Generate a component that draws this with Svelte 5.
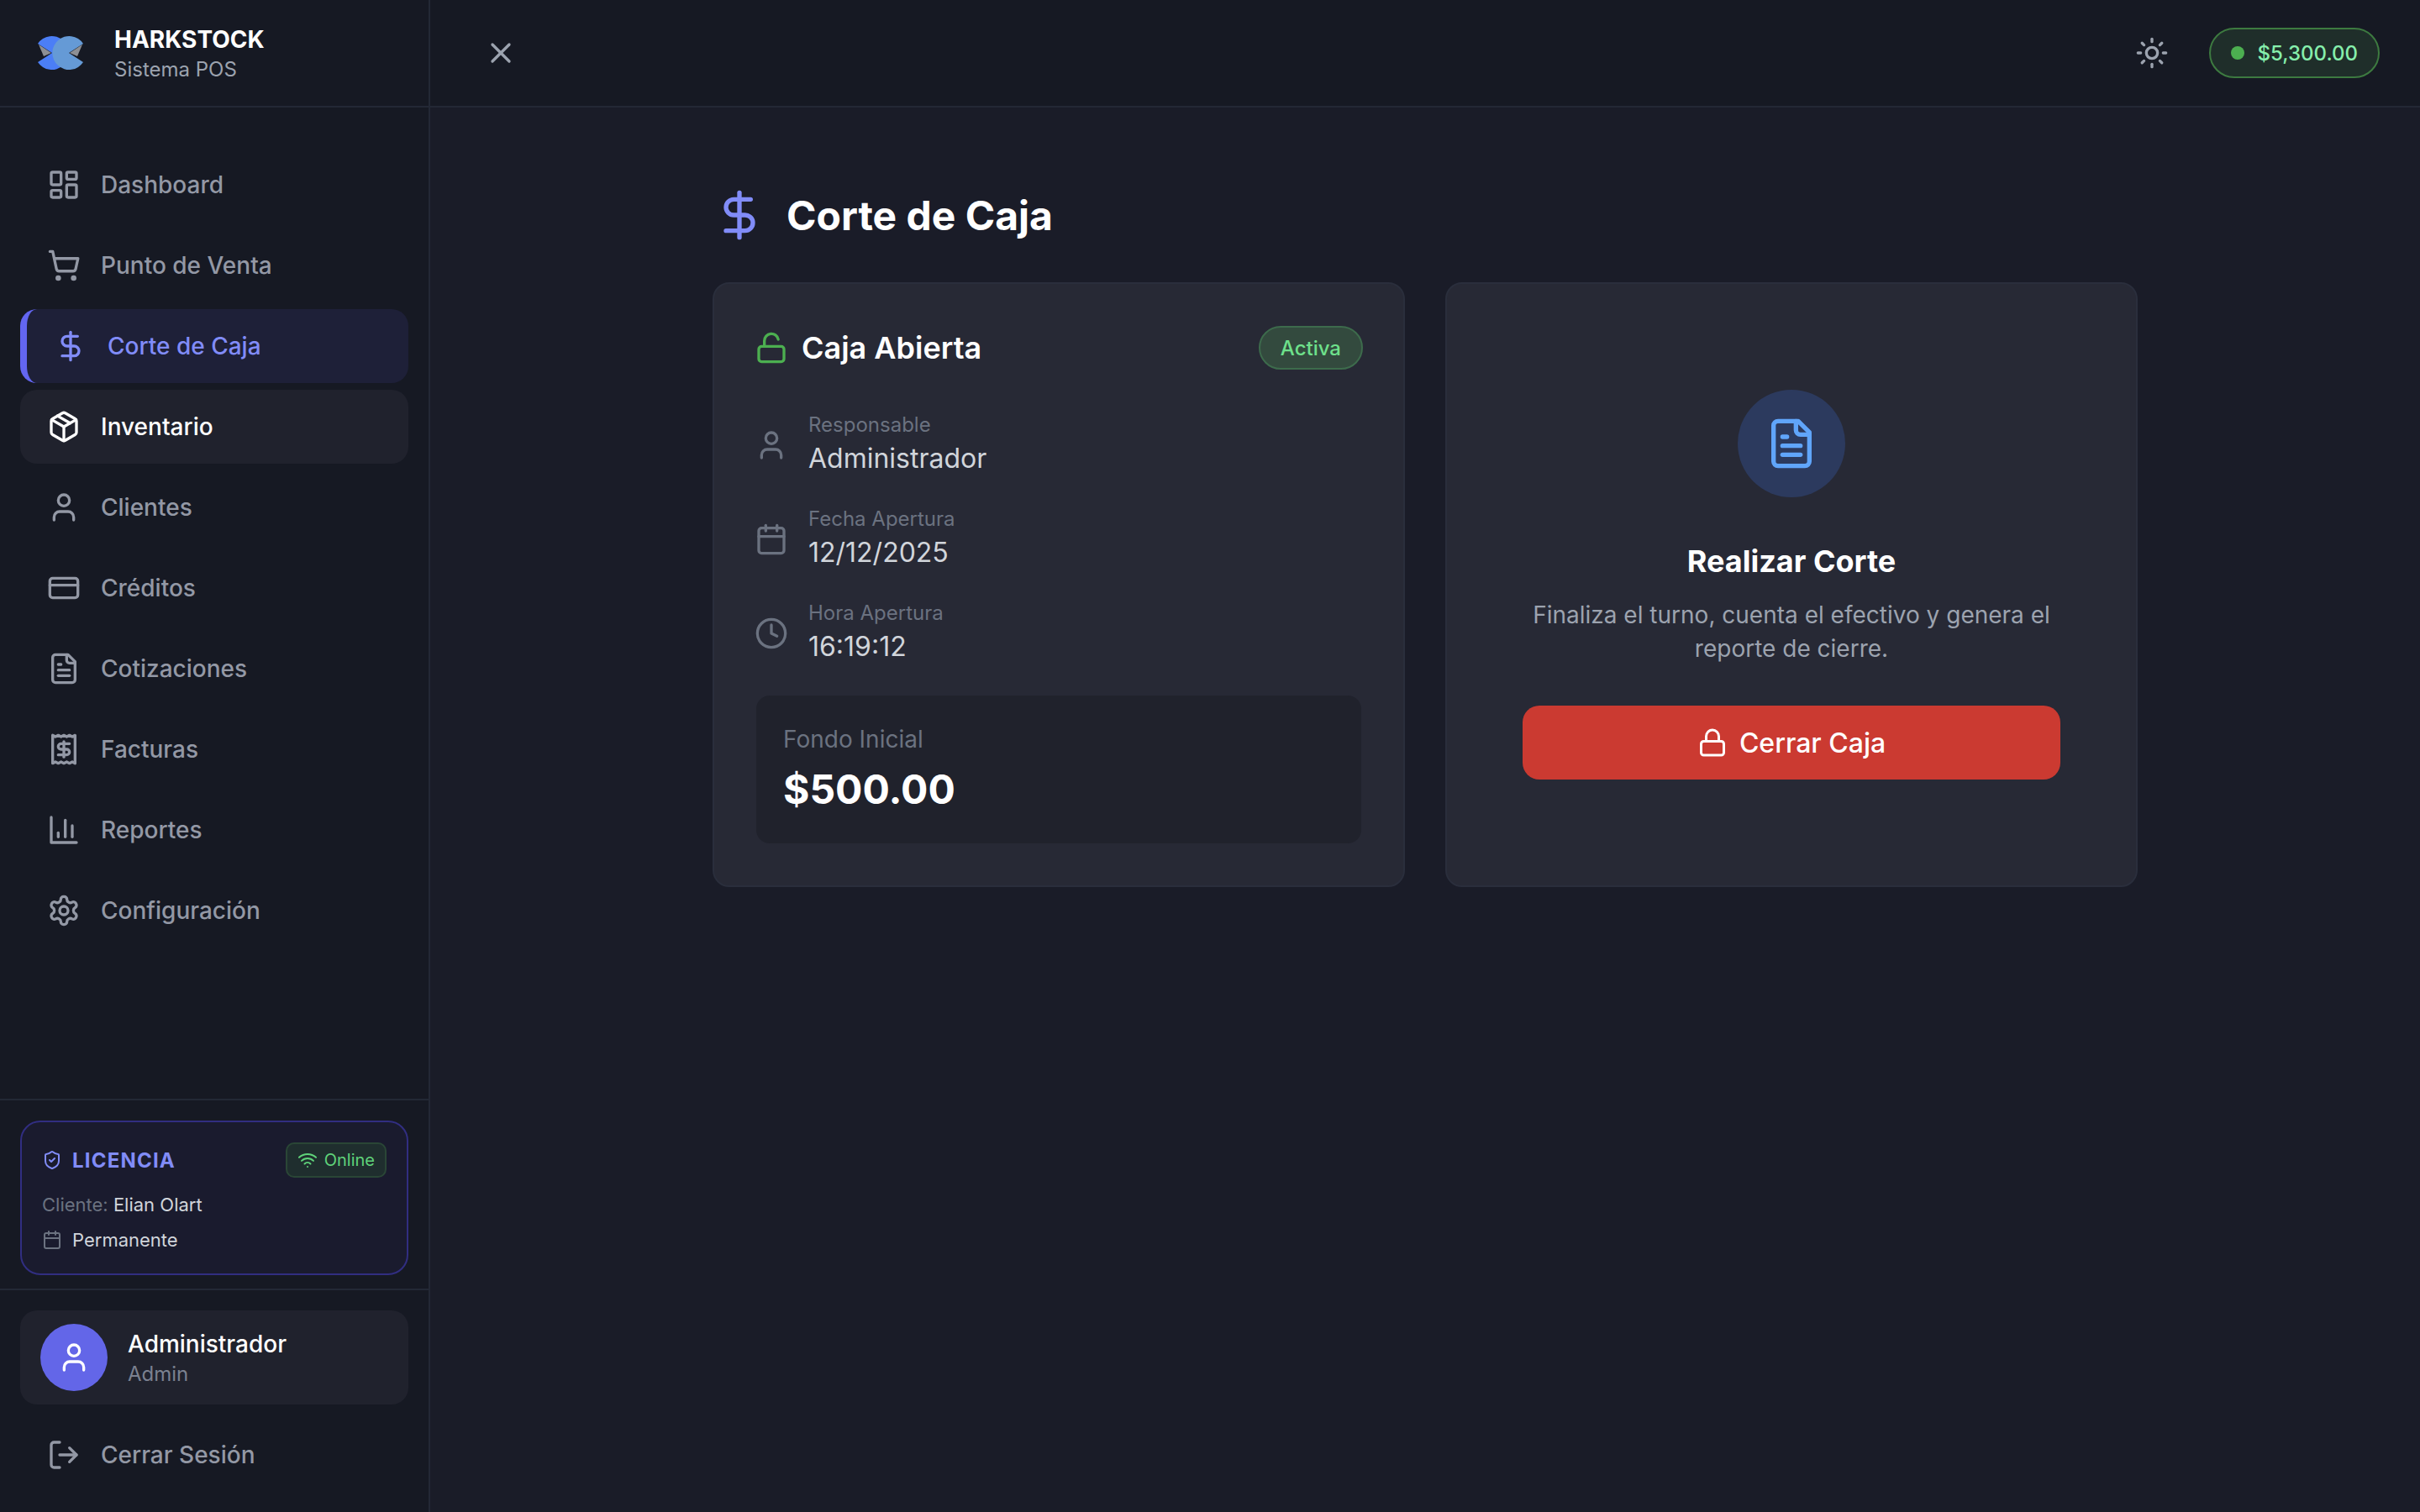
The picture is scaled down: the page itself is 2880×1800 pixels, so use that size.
<script>
  const I = {
    dash: '<rect width="7" height="9" x="3" y="3" rx="1"/><rect width="7" height="5" x="14" y="3" rx="1"/><rect width="7" height="9" x="14" y="12" rx="1"/><rect width="7" height="5" x="3" y="16" rx="1"/>',
    cart: '<circle cx="8" cy="21" r="1"/><circle cx="19" cy="21" r="1"/><path d="M2.05 2.05h2l2.66 12.42a2 2 0 0 0 2 1.58h9.78a2 2 0 0 0 1.95-1.57l1.65-7.43H5.12"/>',
    dollar: '<line x1="12" x2="12" y1="2" y2="22"/><path d="M17 5H9.5a3.5 3.5 0 0 0 0 7h5a3.5 3.5 0 0 1 0 7H6"/>',
    pkg: '<path d="M11 21.73a2 2 0 0 0 2 0l7-4A2 2 0 0 0 21 16V8a2 2 0 0 0-1-1.73l-7-4a2 2 0 0 0-2 0l-7 4A2 2 0 0 0 3 8v8a2 2 0 0 0 1 1.73z"/><path d="M12 22V12"/><polyline points="3.29 7 12 12 20.71 7"/><path d="m7.5 4.27 9 5.15"/>',
    user: '<path d="M19 21v-2a4 4 0 0 0-4-4H9a4 4 0 0 0-4 4v2"/><circle cx="12" cy="7" r="4"/>',
    card: '<rect width="20" height="14" x="2" y="5" rx="2"/><line x1="2" x2="22" y1="10" y2="10"/>',
    file: '<path d="M15 2H6a2 2 0 0 0-2 2v16a2 2 0 0 0 2 2h12a2 2 0 0 0 2-2V7Z"/><path d="M14 2v4a2 2 0 0 0 2 2h4"/><path d="M10 9H8"/><path d="M16 13H8"/><path d="M16 17H8"/>',
    receipt: '<path d="M4 2v20l2-1 2 1 2-1 2 1 2-1 2 1 2-1 2 1V2l-2 1-2-1-2 1-2-1-2 1-2-1-2 1Z"/><path d="M16 8h-6a2 2 0 1 0 0 4h4a2 2 0 1 1 0 4H8"/><path d="M12 17.5v-11"/>',
    chart: '<path d="M3 3v18h18"/><path d="M18 17V9"/><path d="M13 17V5"/><path d="M8 17v-3"/>',
    gear: '<path d="M12.22 2h-.44a2 2 0 0 0-2 2v.18a2 2 0 0 1-1 1.73l-.43.25a2 2 0 0 1-2 0l-.15-.08a2 2 0 0 0-2.73.73l-.22.38a2 2 0 0 0 .73 2.73l.15.1a2 2 0 0 1 1 1.72v.51a2 2 0 0 1-1 1.74l-.15.09a2 2 0 0 0-.73 2.73l.22.38a2 2 0 0 0 2.73.73l.15-.08a2 2 0 0 1 2 0l.43.25a2 2 0 0 1 1 1.73V20a2 2 0 0 0 2 2h.44a2 2 0 0 0 2-2v-.18a2 2 0 0 1 1-1.73l.43-.25a2 2 0 0 1 2 0l.15.08a2 2 0 0 0 2.73-.73l.22-.39a2 2 0 0 0-.73-2.73l-.15-.08a2 2 0 0 1-1-1.74v-.5a2 2 0 0 1 1-1.74l.15-.09a2 2 0 0 0 .73-2.73l-.22-.38a2 2 0 0 0-2.73-.73l-.15.08a2 2 0 0 1-2 0l-.43-.25a2 2 0 0 1-1-1.73V4a2 2 0 0 0-2-2z"/><circle cx="12" cy="12" r="3"/>',
    logout: '<path d="M9 21H5a2 2 0 0 1-2-2V5a2 2 0 0 1 2-2h4"/><polyline points="16 17 21 12 16 7"/><line x1="21" x2="9" y1="12" y2="12"/>',
    shield: '<path d="M20 13c0 5-3.5 7.5-7.66 8.95a1 1 0 0 1-.67-.01C7.5 20.5 4 18 4 13V6a1 1 0 0 1 1-1c2 0 4.5-1.2 6.24-2.72a1.17 1.17 0 0 1 1.52 0C14.51 3.81 17 5 19 5a1 1 0 0 1 1 1z"/><path d="m9 12 2 2 4-4"/>',
    wifi: '<path d="M12 20h.01"/><path d="M2 8.82a15 15 0 0 1 20 0"/><path d="M5 12.859a10 10 0 0 1 14 0"/><path d="M8.5 16.429a5 5 0 0 1 7 0"/>',
    cal: '<path d="M8 2v4"/><path d="M16 2v4"/><rect width="18" height="18" x="3" y="4" rx="2"/><path d="M3 10h18"/>',
    unlock: '<rect width="18" height="11" x="3" y="11" rx="2" ry="2"/><path d="M7 11V7a5 5 0 0 1 9.9-1"/>',
    lock: '<rect width="18" height="11" x="3" y="11" rx="2" ry="2"/><path d="M7 11V7a5 5 0 0 1 10 0v4"/>',
    clock: '<circle cx="12" cy="12" r="10"/><polyline points="12 6 12 12 16 14"/>',
    sun: '<circle cx="12" cy="12" r="4"/><path d="M12 2v2"/><path d="M12 20v2"/><path d="m4.93 4.93 1.41 1.41"/><path d="m17.66 17.66 1.41 1.41"/><path d="M2 12h2"/><path d="M20 12h2"/><path d="m6.34 17.66-1.41 1.41"/><path d="m19.07 4.93-1.41 1.41"/>',
    x: '<path d="M18 6 6 18"/><path d="m6 6 12 12"/>'
  };
  const nav = [
    ['dash', 'Dashboard', ''],
    ['cart', 'Punto de Venta', ''],
    ['dollar', 'Corte de Caja', 'active'],
    ['pkg', 'Inventario', 'hover'],
    ['user', 'Clientes', ''],
    ['card', 'Créditos', ''],
    ['file', 'Cotizaciones', ''],
    ['receipt', 'Facturas', ''],
    ['chart', 'Reportes', ''],
    ['gear', 'Configuración', '']
  ];
  const rows = [
    ['user', 'Responsable', 'Administrador'],
    ['cal', 'Fecha Apertura', '12/12/2025'],
    ['clock', 'Hora Apertura', '16:19:12']
  ];
</script>

{#snippet icon(name, size)}
  <svg class="ic" width={size} height={size} viewBox="0 0 24 24" fill="none" stroke="currentColor" stroke-width="2" stroke-linecap="round" stroke-linejoin="round">{@html I[name]}</svg>
{/snippet}

<div class="app">
  <aside class="sidebar">
    <div class="brand">
      <svg class="logo" width="80" height="80" viewBox="32 23 80 80">
        <path d="M62 63 L45 52 A20 20 0 1 1 45 74 Z" fill="#4b7ef6" />
        <polygon points="46,53 61,63 52,67" fill="#8d8f94" />
        <path d="M82 63 L99 52 A20 20 0 1 0 99 74 Z" fill="#659ad6" />
        <polygon points="98,53 83,63 92,67" fill="#8d8f94" />
      </svg>
      <div class="brand-text">
        <div class="brand-name">HARKSTOCK</div>
        <div class="brand-sub">Sistema POS</div>
      </div>
    </div>

    <nav class="nav">
      {#each nav as [ic, label, state]}
        <div class="nav-item {state}">
          {@render icon(ic, 40)}
          <span>{label}</span>
        </div>
      {/each}
    </nav>

    <div class="license-wrap">
      <div class="license">
        <div class="lic-head">
          <div class="lic-title">{@render icon('shield', 24)}<span>LICENCIA</span></div>
          <div class="online">{@render icon('wifi', 24)}<span>Online</span></div>
        </div>
        <div class="lic-client"><span class="muted">Cliente:</span> Elian Olart</div>
        <div class="lic-perm">{@render icon('cal', 24)}<span>Permanente</span></div>
      </div>
    </div>

    <div class="account">
      <div class="user-box">
        <div class="avatar">{@render icon('user', 40)}</div>
        <div>
          <div class="user-name">Administrador</div>
          <div class="user-role">Admin</div>
        </div>
      </div>
      <div class="nav-item">
        {@render icon('logout', 40)}
        <span>Cerrar Sesión</span>
      </div>
    </div>
  </aside>

  <div class="main">
    <header class="topbar">
      <div class="close">{@render icon('x', 40)}</div>
      <div class="top-right">
        <div class="sun">{@render icon('sun', 40)}</div>
        <div class="balance"><i class="dot"></i><span>$5,300.00</span></div>
      </div>
    </header>

    <main class="content">
      <div class="wrap">
        <div class="title">
          {@render icon('dollar', 64)}
          <h1>Corte de Caja</h1>
        </div>
        <div class="grid">
          <section class="panel">
            <div class="panel-head">
              <div class="panel-title">{@render icon('unlock', 40)}<h2>Caja Abierta</h2></div>
              <div class="pill">Activa</div>
            </div>
            <div class="rows">
              {#each rows as [ic, k, v]}
                <div class="row">
                  {@render icon(ic, 40)}
                  <div>
                    <div class="k">{k}</div>
                    <div class="v">{v}</div>
                  </div>
                </div>
              {/each}
            </div>
            <div class="fund">
              <div class="fund-k">Fondo Inicial</div>
              <div class="fund-v">$500.00</div>
            </div>
          </section>

          <section class="panel action">
            <div class="circle">{@render icon('file', 64)}</div>
            <h3>Realizar Corte</h3>
            <p>Finaliza el turno, cuenta el efectivo y genera el reporte de cierre.</p>
            <button>{@render icon('lock', 36)}<span>Cerrar Caja</span></button>
          </section>
        </div>
      </div>
    </main>
  </div>
</div>

<style>
  :global(body) {
    margin: 0;
    background: #1a1c28;
    font-family: Inter, "Liberation Sans", sans-serif;
  }
  .ic { flex: none; display: block; }
  h1, h2, h3, p { margin: 0; }

  .app { display: flex; height: 100vh; overflow: hidden; }

  .sidebar {
    width: 512px;
    flex: none;
    box-sizing: border-box;
    border-right: 2px solid #232835;
    background: #161923;
    display: flex;
    flex-direction: column;
  }
  .brand {
    height: 128px;
    box-sizing: border-box;
    border-bottom: 2px solid #232835;
    display: flex;
    align-items: center;
    gap: 24px;
    padding-left: 32px;
  }
  .logo { display: block; flex: none; }
  .brand-name { font-size: 28px; line-height: 40px; font-weight: 700; color: #fff; }
  .brand-sub { font-size: 24px; line-height: 32px; color: #9ca3af; }

  .nav {
    flex: 1;
    padding: 48px 24px 0;
    display: flex;
    flex-direction: column;
    gap: 8px;
  }
  .nav-item {
    height: 88px;
    box-sizing: border-box;
    padding-left: 32px;
    display: flex;
    align-items: center;
    gap: 24px;
    border-radius: 20px;
    font-size: 28px;
    font-weight: 500;
    color: #9398a5;
  }
  .nav-item.active {
    background: #1e2038;
    color: #818cf8;
    border-left: 8px solid #6366f1;
  }
  .nav-item.hover { background: #20222d; color: #fff; }

  .license-wrap {
    border-top: 2px solid #232835;
    border-bottom: 2px solid #232835;
    padding: 24px 24px 16px;
  }
  .license {
    box-sizing: border-box;
    height: 184px;
    border: 2px solid #312e81;
    border-radius: 24px;
    background: #1a1b2e;
    padding: 24px 24px 0;
  }
  .lic-head { display: flex; justify-content: space-between; align-items: center; height: 42px; }
  .lic-title { display: flex; align-items: center; gap: 12px; color: #818cf8; font-size: 24px; font-weight: 700; letter-spacing: 1.2px; }
  .online {
    display: flex;
    align-items: center;
    gap: 8px;
    box-sizing: border-box;
    height: 42px;
    padding: 0 12px;
    border: 2px solid #2a4636;
    border-radius: 10px;
    background: #1f2e2e;
    color: #5fd37a;
    font-size: 20px;
  }
  .lic-client { margin-top: 14px; font-size: 22px; line-height: 36px; color: #d1d5db; }
  .muted { color: #6b7280; }
  .lic-perm { margin-top: 6px; display: flex; align-items: center; gap: 12px; font-size: 22px; line-height: 36px; color: #d1d5db; }
  .lic-perm .ic { color: #6b7280; }

  .account { padding: 24px; display: flex; flex-direction: column; gap: 16px; }
  .user-box {
    height: 112px;
    box-sizing: border-box;
    border-radius: 20px;
    background: #20222d;
    padding: 0 24px;
    display: flex;
    align-items: center;
    gap: 24px;
  }
  .avatar {
    width: 80px;
    height: 80px;
    flex: none;
    border-radius: 50%;
    background: #6366e8;
    color: #fff;
    display: flex;
    align-items: center;
    justify-content: center;
  }
  .user-name { font-size: 28px; line-height: 40px; font-weight: 500; color: #fff; }
  .user-role { font-size: 24px; line-height: 32px; color: #7b8190; }

  .main { flex: 1; min-width: 0; display: flex; flex-direction: column; }
  .topbar {
    height: 128px;
    flex: none;
    box-sizing: border-box;
    border-bottom: 2px solid #232835;
    background: #161923;
    display: flex;
    align-items: center;
    justify-content: space-between;
    padding: 0 48px;
  }
  .close { padding: 16px; color: #9ca3af; }
  .top-right { display: flex; align-items: center; gap: 48px; }
  .sun { color: #9ca3af; }
  .balance {
    box-sizing: border-box;
    height: 60px;
    display: flex;
    align-items: center;
    gap: 16px;
    padding: 0 24px;
    border: 2px solid #3d7a40;
    border-radius: 30px;
    background: #1f2e2a;
    color: #86efac;
    font-size: 24px;
    font-weight: 500;
  }
  .dot { width: 16px; height: 16px; border-radius: 50%; background: #4caf50; }

  .content { flex: 1; padding: 96px 0 0; display: flex; justify-content: center; }
  .wrap { width: 1696px; }
  .title { display: flex; align-items: center; gap: 24px; height: 64px; margin-bottom: 48px; color: #818cf8; }
  h1 { font-size: 48px; font-weight: 700; color: #fff; }
  .grid { display: grid; grid-template-columns: 1fr 1fr; gap: 48px; }
  .panel {
    box-sizing: border-box;
    height: 720px;
    border: 2px solid #2a2e3c;
    border-radius: 20px;
    background: #272935;
    padding: 50px;
  }
  .panel-head { display: flex; justify-content: space-between; align-items: center; height: 52px; margin: 0 -2px 48px; }
  .panel-title { display: flex; align-items: center; gap: 16px; color: #4caf50; }
  h2 { font-size: 36px; font-weight: 600; color: #fff; }
  .pill {
    box-sizing: border-box;
    height: 52px;
    padding: 0 24px;
    display: flex;
    align-items: center;
    border: 2px solid #3d6b4c;
    border-radius: 26px;
    background: #334a3e;
    color: #6ee08b;
    font-size: 24px;
    font-weight: 500;
  }
  .rows { display: flex; flex-direction: column; gap: 32px; margin: 0 0 36px -2px; }
  .row { display: flex; align-items: center; gap: 24px; color: #6b7280; }
  .row .ic { margin-top: 4px; }
  .k { font-size: 24px; line-height: 36px; color: #6b7280; }
  .v { font-size: 32px; line-height: 44px; color: #d1d5db; }
  .fund {
    box-sizing: border-box;
    height: 176px;
    border-radius: 16px;
    background: #20222c;
    padding: 32px;
  }
  .fund-k { font-size: 28px; line-height: 40px; color: #6b7280; }
  .fund-v { margin-top: 8px; font-size: 48px; line-height: 64px; font-weight: 700; color: #fff; }

  .action { display: flex; flex-direction: column; align-items: center; justify-content: center; padding: 0 90px; }
  .circle {
    width: 128px;
    height: 128px;
    border-radius: 50%;
    background: #2c3a5e;
    color: #60a5fa;
    display: flex;
    align-items: center;
    justify-content: center;
  }
  h3 { margin-top: 54px; font-size: 36px; line-height: 44px; font-weight: 700; color: #fff; }
  p { margin-top: 22px; font-size: 28px; line-height: 40px; color: #9ca3af; text-align: center; }
  button {
    margin-top: 48px;
    width: 640px;
    height: 88px;
    border: none;
    border-radius: 20px;
    background: #cb3a31;
    color: #fff;
    display: flex;
    align-items: center;
    justify-content: center;
    gap: 14px;
    font-family: inherit;
    font-size: 32px;
    font-weight: 500;
  }
</style>
